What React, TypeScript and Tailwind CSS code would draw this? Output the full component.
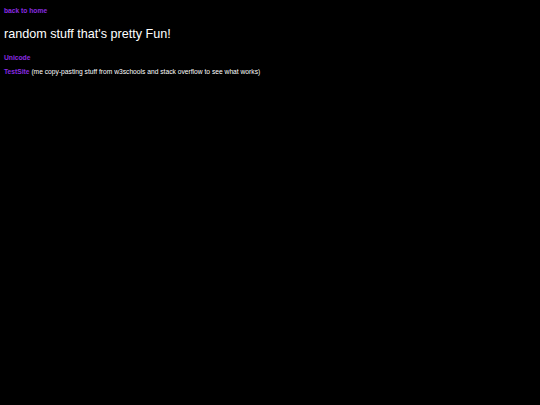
export default function App() {
  return (
    <div className="w-[540px] h-[405px] bg-black text-white px-[4px] pt-[7px]" style={{ fontFamily: '"Liberation Sans", Arial, sans-serif' }}>
      <a className="block text-[6.7px] leading-[8px] font-bold text-[#8a2be2]">back to home</a>
      <h1 className="mt-[12px] text-[12.6px] leading-[15px] text-white">random stuff that's pretty Fun!</h1>
      <div className="mt-[12px] text-[6.7px] leading-[8px] font-bold text-[#8a2be2]">Unicode</div>
      <div className="mt-[6px] text-[6.7px] leading-[8px]">
        <span className="font-bold text-[#8a2be2]">TestSite</span> (me copy-pasting stuff from w3schools and stack overflow to see what works)
      </div>
    </div>
  );
}
